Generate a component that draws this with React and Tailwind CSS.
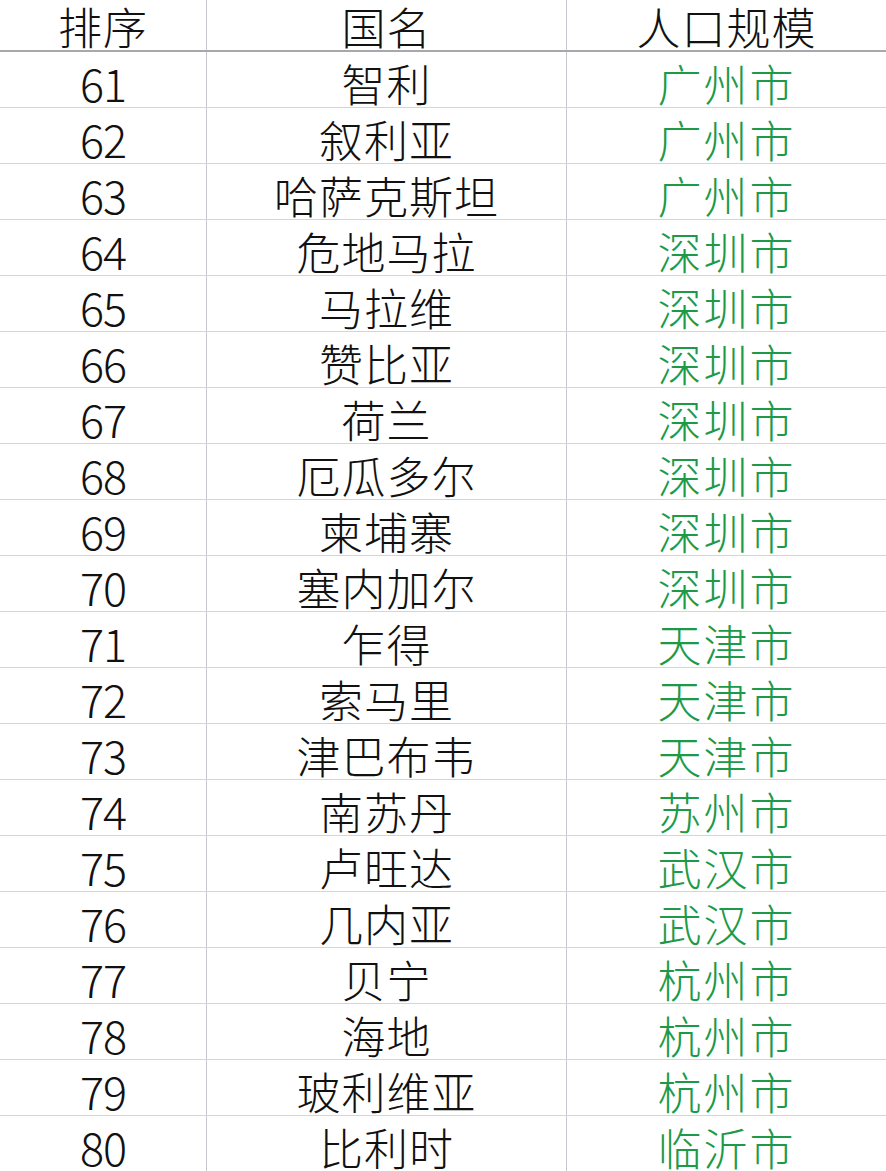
const rows = [
  [61, "智利", "广州市"],
  [62, "叙利亚", "广州市"],
  [63, "哈萨克斯坦", "广州市"],
  [64, "危地马拉", "深圳市"],
  [65, "马拉维", "深圳市"],
  [66, "赞比亚", "深圳市"],
  [67, "荷兰", "深圳市"],
  [68, "厄瓜多尔", "深圳市"],
  [69, "柬埔寨", "深圳市"],
  [70, "塞内加尔", "深圳市"],
  [71, "乍得", "天津市"],
  [72, "索马里", "天津市"],
  [73, "津巴布韦", "天津市"],
  [74, "南苏丹", "苏州市"],
  [75, "卢旺达", "武汉市"],
  [76, "几内亚", "武汉市"],
  [77, "贝宁", "杭州市"],
  [78, "海地", "杭州市"],
  [79, "玻利维亚", "杭州市"],
  [80, "比利时", "临沂市"],
];

const font = {
  fontFamily: '"Noto Sans CJK SC", "Noto Sans", sans-serif',
};

export default function App() {
  return (
    <div
      className="w-[886px] h-[1172px] bg-white overflow-hidden text-[44px] leading-[44px] font-light text-[#111]"
      style={font}
    >
      {/* header */}
      <div className="grid grid-cols-[207px_360px_1fr] h-[52px] border-b-2 border-[#a8a8ac]">
        <div className="flex items-center justify-center pt-[2px] border-r border-[#c6c6cc] tracking-[1px]">
          排序
        </div>
        <div className="flex items-center justify-center pt-[2px] border-r border-[#c6c6cc] tracking-[1px]">
          国名
        </div>
        <div className="flex items-center justify-center pt-[2px] tracking-[1px]">
          人口规模
        </div>
      </div>

      {rows.map(([n, name, city]) => (
        <div
          key={n}
          className="grid grid-cols-[207px_360px_1fr] h-[56px] border-b border-[#d4d4da]"
        >
          <div className="flex items-center justify-center pt-[6px] border-r border-[#c6c6cc] text-[45px] tracking-[-1px]">
            {n}
          </div>
          <div className="flex items-center justify-center pt-[6px] border-r border-[#c6c6cc] tracking-[1px]">
            {name}
          </div>
          <div className="flex items-center justify-center pt-[6px] text-[#1c9a48] tracking-[2px]">
            {city}
          </div>
        </div>
      ))}
    </div>
  );
}
